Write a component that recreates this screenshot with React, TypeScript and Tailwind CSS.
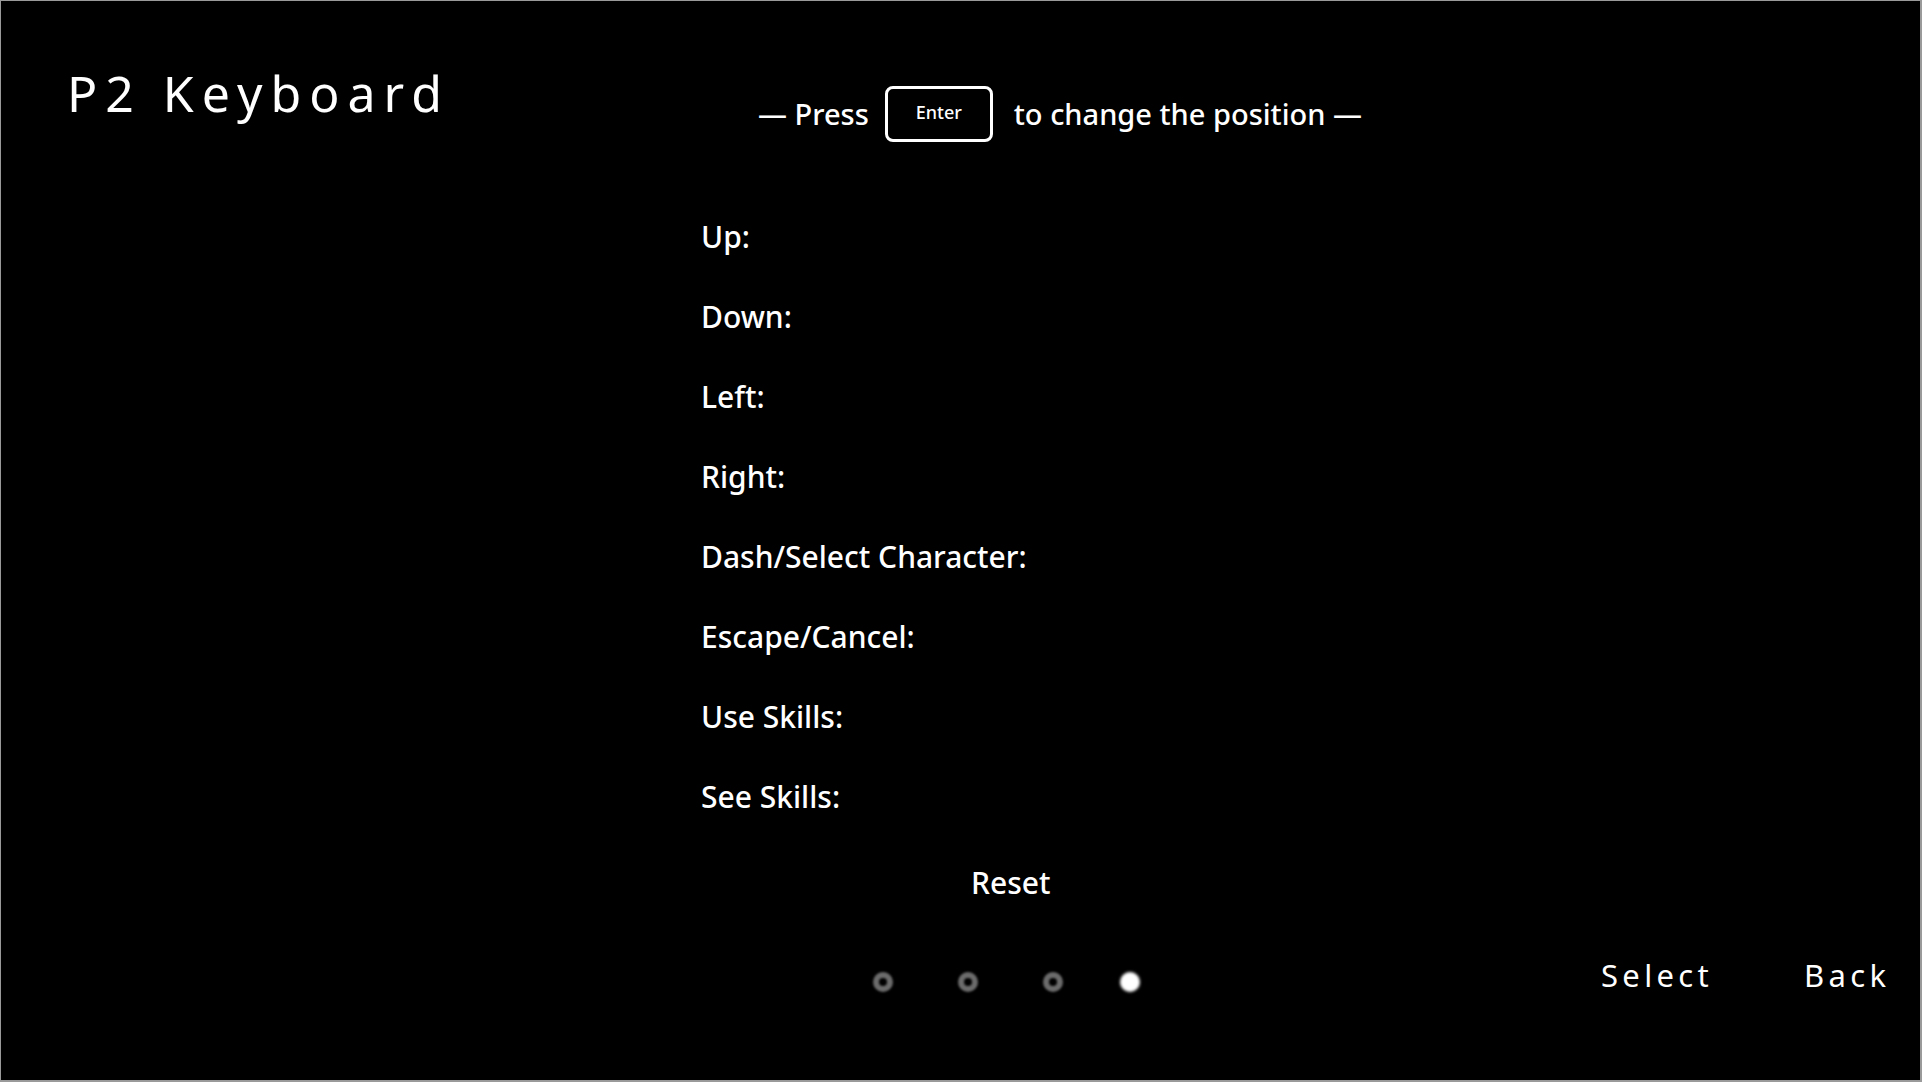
import React from "react";

const font = { fontFamily: '"Noto Sans", "Open Sans", sans-serif' };

const labels = [
  "Up:",
  "Down:",
  "Left:",
  "Right:",
  "Dash/Select Character:",
  "Escape/Cancel:",
  "Use Skills:",
  "See Skills:",
];

function Dot({ active }: { active?: boolean }) {
  if (active) {
    return <div className="w-[20px] h-[20px] rounded-full bg-white blur-[1.5px]" />;
  }
  return (
    <div className="w-[20px] h-[20px] rounded-full border-[6px] border-[#6b6b6b] blur-[1px]" />
  );
}

export default function App() {
  return (
    <div
      className="w-[1922px] h-[1082px] bg-black text-white border-t border-l border-r-2 border-b-2 border-[#9a9a9a] flex flex-col overflow-hidden"
      style={font}
    >
      <div className="flex h-[196px]">
        <div className="pt-[68px] pl-[66px] w-[757px] text-[50px] leading-[48px] tracking-[0.16em] font-normal">
          P2 Keyboard
        </div>
        <div className="pt-[85px] flex items-center h-[141px] text-[29px] leading-[56px] font-medium">
          <span>— Press</span>
          <div className="ml-[16px] w-[108px] h-[56px] border-[3px] border-white rounded-[8px] flex items-center justify-center text-[18px] leading-[20px] font-medium pb-[4px]">
            Enter
          </div>
          <span className="ml-[21px]">to change the position —</span>
        </div>
      </div>
      <div className="flex flex-col pl-[700px]">
        {labels.map((l) => (
          <div key={l} className="h-[80px] leading-[80px] text-[30px] font-medium">
            {l}
          </div>
        ))}
      </div>
      <div className="mt-[26px] h-[40px] pl-[970px] text-[30px] leading-[40px] font-medium">Reset</div>
      <div className="mt-[51px] flex items-center h-[56px]">
        <div className="ml-[872px] flex items-center gap-[65px]">
          <Dot />
          <Dot />
          <Dot />
        </div>
        <div className="ml-[57px]">
          <Dot active />
        </div>
        <div className="ml-[461px] pb-[14px] text-[31px] leading-[40px] tracking-[0.14em] font-normal">Select</div>
        <div className="ml-[91px] pb-[14px] text-[31px] leading-[40px] tracking-[0.14em] font-normal">Back</div>
      </div>
    </div>
  );
}
